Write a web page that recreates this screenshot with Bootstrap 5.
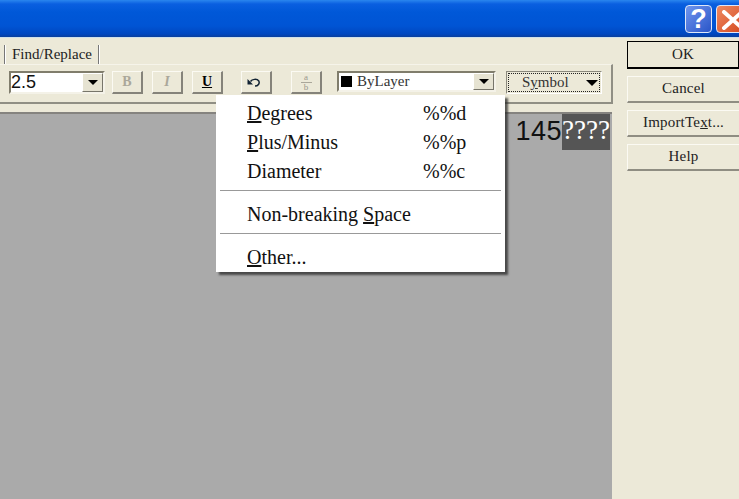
<!DOCTYPE html>
<html lang="en">
<head>
<meta charset="utf-8">
<title>Text editor</title>
<link href="https://cdn.jsdelivr.net/npm/bootstrap@5.3.0/dist/css/bootstrap.min.css" rel="stylesheet">
<style>
html,body{height:100%;overflow:hidden}
body{background:#ece9d8;color:#111;font-family:"Liberation Serif",serif;font-size:15px;line-height:1}
.dlg{position:relative;height:499px;width:739px;overflow:hidden}
.titlebar{height:38px;background:linear-gradient(#2a86ee 0,#0a5fe0 4px,#0058d8 12px,#0054d4 26px,#0047c0 34px,#0a3f9c 37px,#cfe0ea 37px);padding:5px 0 0 685px;gap:4px}
.cap{height:28px;border-radius:4px;border:1px solid #dfe8f8;flex:none}
.cap-help{width:27px;background:linear-gradient(135deg,#6f96ee,#2a55c8);color:#fff;font:700 27px/26px "Liberation Sans",sans-serif;text-align:center}
.cap-close{width:30px;background:linear-gradient(135deg,#ee8a62,#d4481e);padding:4px}
.main-area{height:461px}
.left-col{width:613px;flex:none}
.tabstrip{height:26px;padding:7px 0 0 4px}
.tabdiv{width:2px;height:19px;border-left:1px solid #777;border-right:1px solid #fff}
.tablabel{padding:2px 5px 0 6px;width:92px;color:#222;font-size:15px}
.toolbar{height:40px;padding:6px 0 0 9px;border-right:2px solid #908f84;border-bottom:2px solid #908f84;border-top:1px solid #f6f4ea}
.combo{height:23px;background:#fff;border:2px solid;border-color:#807d6c #f4f2e8 #f4f2e8 #807d6c;flex:none}
.combo-size{width:96px;font:18px/19px "Liberation Sans",sans-serif;padding-left:0}
.combo-layer{width:159px;margin-left:15px;height:21px;font-size:15px;padding-left:2px;align-items:center;gap:5px;color:#333}
.combo-val{flex:1;min-width:0}
.drop{width:21px;align-self:stretch;background:#e6e3d2;border:1px solid;border-color:#fff #77756a #77756a #fff;display:flex;align-items:center;justify-content:center}
.tri{width:0;height:0;border-left:5px solid transparent;border-right:5px solid transparent;border-top:5px solid #000}
.swatch{width:11px;height:11px;background:#000;flex:none}
.tbtn{width:31px;height:23px;padding:0;border:0;border-radius:0;background:#ece9d8;border-right:2px solid #85837a;border-bottom:2px solid #85837a;border-top:1px solid #fbfaf3;border-left:1px solid #fbfaf3;display:flex;align-items:center;justify-content:center;flex:none;font:700 14px/1 "Liberation Serif",serif;color:#000;margin-left:9px}
.tbtn.muted-tb{color:#aaa79a}
.tbtn.first-tb{margin-left:7px}
.tbtn.gap-wide{margin-left:18px}
.tbtn.gap-frac{margin-left:19px}
.undo-ico{margin-right:5px}
.frac{display:flex;flex-direction:column;align-items:center;font:400 9px/9px "Liberation Serif",serif;color:#9a988c}
.frac i{display:block;width:11px;height:1px;background:#aaa79a}
.symbol{width:96px;height:23px;margin-left:10px;border:1px solid;border-color:#8a887c #fff #fff #8a887c;padding:1px;flex:none}
.symbol-in{height:100%;border:1px dotted #222;padding:0 1px 0 13px;align-items:center;justify-content:space-between;color:#333}
.symbol .tri{border-left-width:6px;border-right-width:6px;border-top-width:6px}
.gapline{height:8px}
.canvas-area{height:387px;background:#aaa;border-top:2px solid #85837f;padding:0 2px 0 0;margin-right:1px}
.num{font:27px/34px "Liberation Sans",sans-serif;color:#111;letter-spacing:.5px}
.sel{width:48px;height:36px;background:#555;color:#fff;font:27px/32px "Liberation Serif",serif;text-align:center}
.right-col{flex:1;padding:3px 0 0 14px;gap:7px}
.side{height:27px;padding:0 0 2px;border-radius:0;background:#ece9d8;color:#222;font:15px/1 "Liberation Serif",serif;letter-spacing:.2px;border:0;border-bottom:2px solid #8f8d82;border-top:1px solid #fbfaf3;border-left:1px solid #fbfaf3}
.side.primary-btn{height:28px;padding:0;border:1px solid #000;border-bottom:2px solid #000}
.popup.dropdown-menu{left:216px;top:95px;width:289px;height:177px;border:0;border-radius:0;background:#fff;padding:3px 2px 0;box-shadow:3px 3px 2px rgba(40,40,40,.75);font-size:20px;margin:0}
.popup .dropdown-item{height:29px;padding:0 0 0 29px;color:#111;display:flex;align-items:center;line-height:1;font-size:20px;background:none}
.popup .short{margin-left:auto;width:80px}
.popup .dropdown-divider{margin:5px 2px 8px;border-top:1px solid #999;opacity:1;height:0}
</style>
</head>
<body>
<div class="dlg">
  <div class="titlebar d-flex">
    <div class="cap cap-help">?</div>
    <div class="cap cap-close"><svg width="24" height="20" viewBox="0 0 24 20"><path d="M3 2 L21 18 M21 2 L3 18" stroke="#fff" stroke-width="4" stroke-linecap="round"/></svg></div>
  </div>
  <div class="main-area d-flex">
    <div class="left-col d-flex flex-column">
      <div class="tabstrip d-flex">
        <div class="tabdiv"></div><div class="tablabel">Find/Replace</div><div class="tabdiv"></div>
      </div>
      <div class="toolbar d-flex align-items-start">
        <div class="combo combo-size d-flex"><span class="combo-val">2.5</span><span class="drop"><span class="tri"></span></span></div>
        <button class="btn tbtn muted-tb first-tb" type="button">B</button>
        <button class="btn tbtn muted-tb" type="button"><em>I</em></button>
        <button class="btn tbtn" type="button"><u>U</u></button>
        <button class="btn tbtn gap-wide" type="button"><svg class="undo-ico" width="14" height="11" viewBox="0 0 14 11"><path d="M3.5 4.5 C5 2 10 1.5 11.8 4 C13 6.5 11 9 8 9" fill="none" stroke="#123" stroke-width="1.5"/><path d="M0.5 2 L6 7.5 L0.5 7.5 Z" fill="#123"/></svg></button>
        <button class="btn tbtn gap-frac" type="button"><span class="frac"><span>a</span><i></i><span>b</span></span></button>
        <div class="combo combo-layer d-flex"><span class="swatch"></span><span class="combo-val">ByLayer</span><span class="drop"><span class="tri"></span></span></div>
        <div class="symbol"><div class="symbol-in d-flex"><span>S<u>y</u>mbol</span><span class="tri"></span></div></div>
      </div>
      <div class="gapline"></div>
      <div class="canvas-area d-flex justify-content-end align-items-start">
        <span class="num">145</span><span class="sel">????</span>
      </div>
    </div>
    <div class="right-col d-flex flex-column">
      <button class="btn side primary-btn" type="button">OK</button>
      <button class="btn side" type="button">Cancel</button>
      <button class="btn side" type="button">ImportTe<u>x</u>t...</button>
      <button class="btn side" type="button">Help</button>
    </div>
  </div>
  <ul class="dropdown-menu show popup list-unstyled">
    <li><a class="dropdown-item" href="#"><span><u>D</u>egrees</span><span class="short">%%d</span></a></li>
    <li><a class="dropdown-item" href="#"><span><u>P</u>lus/Minus</span><span class="short">%%p</span></a></li>
    <li><a class="dropdown-item" href="#"><span>Diameter</span><span class="short">%%c</span></a></li>
    <li><hr class="dropdown-divider"></li>
    <li><a class="dropdown-item" href="#"><span>Non-breaking <u>S</u>pace</span></a></li>
    <li><hr class="dropdown-divider"></li>
    <li><a class="dropdown-item" href="#"><span><u>O</u>ther...</span></a></li>
  </ul>
</div>
<script src="https://cdn.jsdelivr.net/npm/bootstrap@5.3.0/dist/js/bootstrap.bundle.min.js"></script>
</body>
</html>
